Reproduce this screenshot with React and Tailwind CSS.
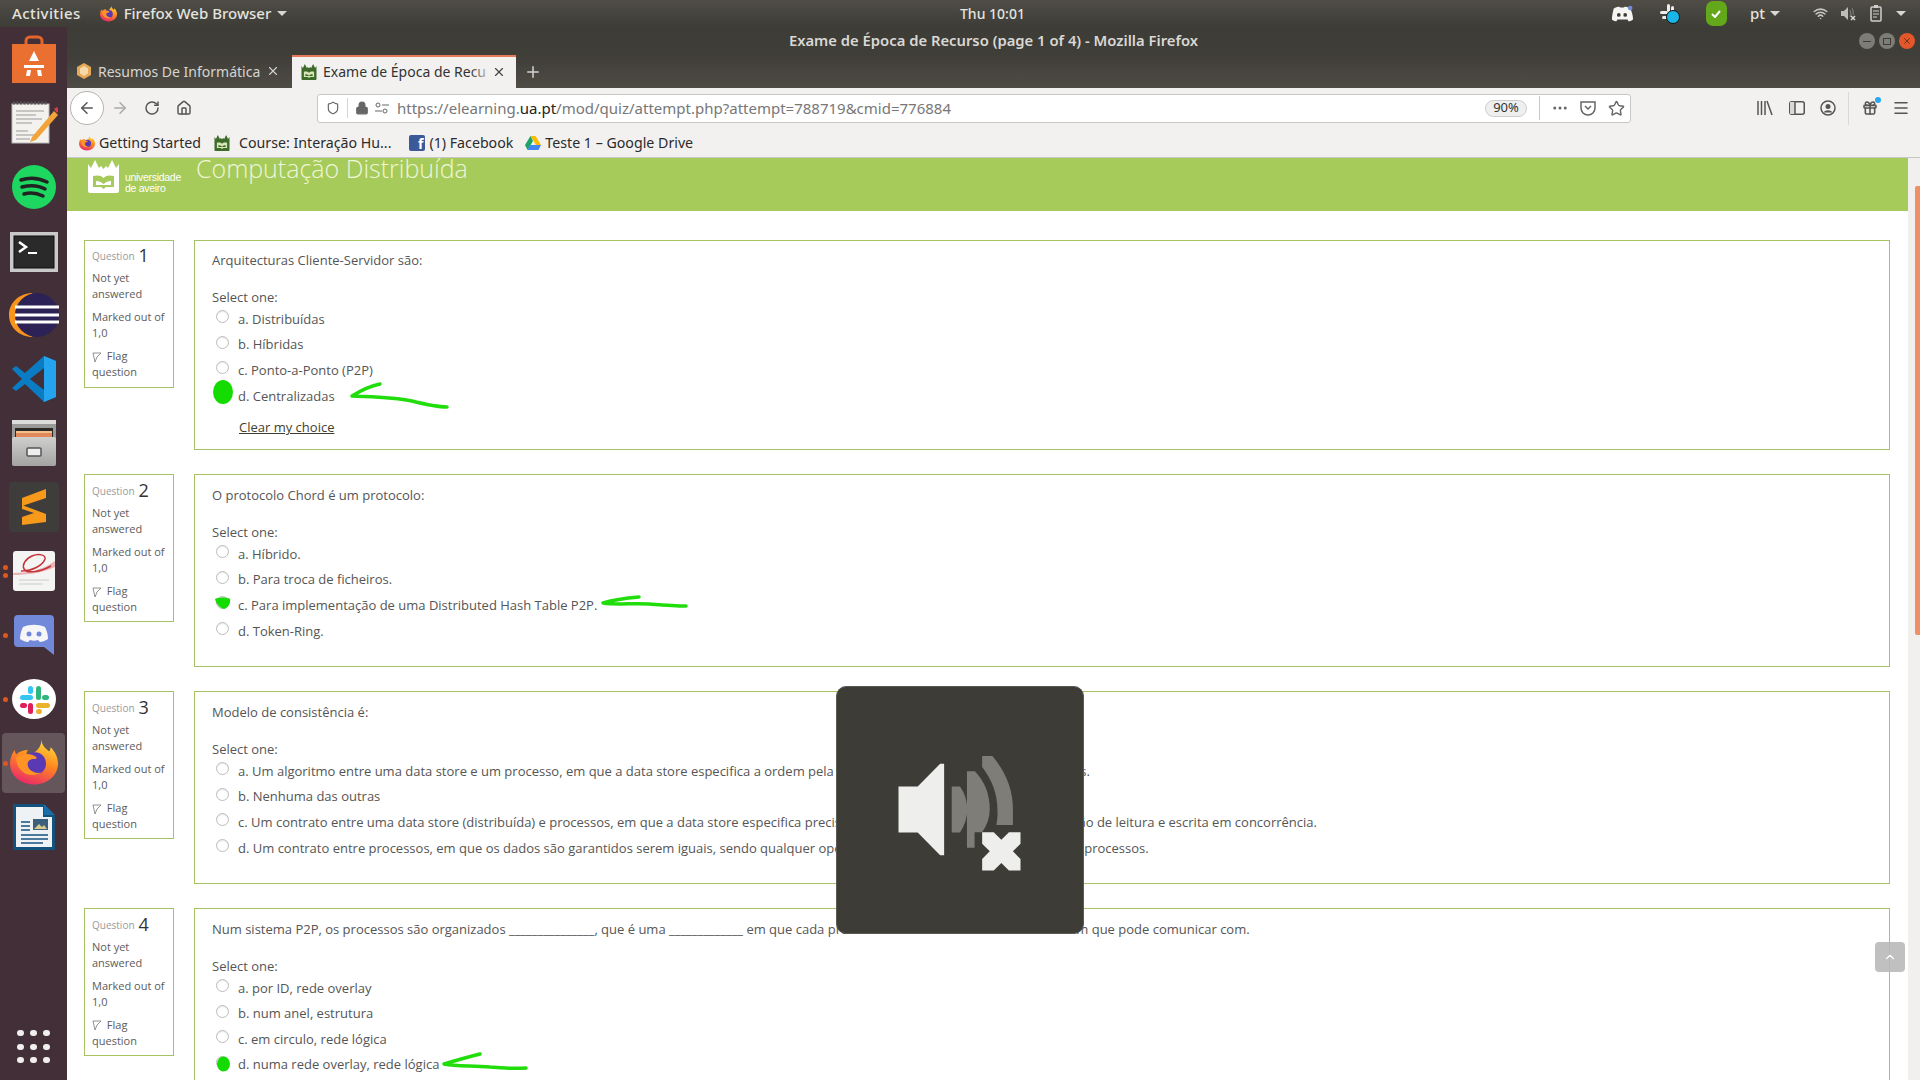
import { ArrowLeft, ArrowRight, RotateCw, Home, Lock, Shield, X, Plus, Star, MoreHorizontal, Menu, Gift, Wifi, ChevronUp } from 'lucide-react';

const QUESTIONS = [
  {
    n: 1,
    text: 'Arquitecturas Cliente-Servidor são:',
    options: ['a. Distribuídas', 'b. Híbridas', 'c. Ponto-a-Ponto (P2P)', 'd. Centralizadas'],
    clear: true,
  },
  {
    n: 2,
    text: 'O protocolo Chord é um protocolo:',
    options: ['a. Híbrido.', 'b. Para troca de ficheiros.', 'c. Para implementação de uma Distributed Hash Table P2P.', 'd. Token-Ring.'],
  },
  {
    n: 3,
    text: 'Modelo de consistência é:',
    options: [
      'a. Um algoritmo entre uma data store e um processo, em que a data store especifica a ordem pela qual as escritas são lidas pelos processos.',
      'b. Nenhuma das outras',
      'c. Um contrato entre uma data store (distribuída) e processos, em que a data store especifica precisamente o resultado sob alguma operação de leitura e escrita em concorrência.',
      'd. Um contrato entre processos, em que os dados são garantidos serem iguais, sendo qualquer operação de escrita propagada para outros processos.',
    ],
  },
  {
    n: 4,
    text: 'Num sistema P2P, os processos são organizados _______________, que é uma _____________ em que cada processo tem uma lista de nós aliados com que pode comunicar com.',
    options: ['a. por ID, rede overlay', 'b. num anel, estrutura', 'c. em circulo, rede lógica', 'd. numa rede overlay, rede lógica'],
  },
];

function FirefoxLogo({ size = 16 }) {
  return (
    <svg width={size} height={size} viewBox="0 0 32 32">
      <defs>
        <linearGradient id="ffo" x1="0.7" y1="0" x2="0.3" y2="1">
          <stop offset="0" stopColor="#ffdc3a" />
          <stop offset="0.45" stopColor="#ff8a1f" />
          <stop offset="1" stopColor="#e9266a" />
        </linearGradient>
      </defs>
      <path d="M21 1c0 4 3 6 5 8 1-1 1-2 1-3 3 3 5 7 5 11 0 8-7 14-16 14C7 31 0 25 0 17c0-3 1-6 3-9l1 3c2-2 5-3 8-3-1 1-1 2-1 3 5 0 10-4 10-10z" fill="url(#ffo)" />
      <circle cx="16.500" cy="17" r="7.500" fill="#5b39b5" />
      <path d="M4 13c3-2 7-3 10-2 4 1 5 3 2 3-3 0-5 2-4 5 1 3 5 5 9 4-5 3-11 2-14-2-2-2-3-5-3-8z" fill="#ff9326" />
    </svg>
  );
}

function UaLogo({ w = 31, h = 33, fill = '#fff', book = '#a6cb5a' }) {
  return (
    <svg width={w} height={h} viewBox="0 0 31 33">
      <path d="M0 4l3 4 4-8 4 8 2-2 2.500 3 2.500-3 2 2 4-8 4 8 3-4v27a2 2 0 0 1-2 2H2a2 2 0 0 1-2-2z" fill={fill} />
      <path d="M5 16c4-1 8-1 10.500 2 2.500-3 6.500-3 10.500-2v11h-8l-2.500 2-2.500-2H5z" fill={book} />
      <path d="M8 21c3 0 5 1 7.500 3 2.500-2 4.500-3 7.500-3v4h-15z" fill={fill} />
    </svg>
  );
}

function TopBar() {
  return (
    <div className="relative flex h-[27px] shrink-0 items-center bg-gradient-to-b from-[#4f4d46] to-[#3e3c37] text-[15px] font-medium text-[#e4e3df]">
      <span className="ml-3 tracking-[0.4px]">Activities</span>
      <span className="ml-[19px] flex items-center gap-[7px]">
        <FirefoxLogo size={17} />
        Firefox Web Browser
      </span>
      <span className="ml-[6px] h-0 w-0 border-x-[5px] border-t-[5px] border-x-transparent border-t-[#d8d7d3]" />
      <span className="absolute left-[960px] top-[3px] text-[14px]">Thu 10:01</span>
      <div className="ml-auto flex items-center">
        <svg width="22" height="18" viewBox="0 0 24 18" className="mr-[26px]">
          <path d="M3 3c3-2 5-2 6-2l1 1h4l1-1c1 0 3 0 6 2 2 4 3 8 3 12-2 2-4 2-5 2l-1-2H7l-1 2c-1 0-3 0-5-2 0-4 1-8 2-12z" fill="#f4f4f2" />
          <circle cx="8.500" cy="10" r="2" fill="#3e3c37" />
          <circle cx="15.500" cy="10" r="2" fill="#3e3c37" />
          <circle cx="21" cy="2.500" r="2.500" fill="#7289da" />
        </svg>
        <svg width="22" height="22" viewBox="0 0 22 22" className="mr-[25px]">
          <rect x="8" y="1" width="3" height="8" rx="1.500" fill="#eee" />
          <rect x="1" y="8" width="8" height="3" rx="1.500" fill="#eee" />
          <rect x="3" y="13" width="5" height="3" rx="1.500" fill="#eee" />
          <rect x="12" y="3" width="3" height="6" rx="1.500" fill="#eee" />
          <circle cx="14" cy="14" r="6.500" fill="#19b5e6" stroke="#111" />
        </svg>
        <span className="mr-[23px] flex h-[25px] w-[21px] items-center justify-center rounded-[7px] bg-[#62a81a]">
          <svg width="10" height="8" viewBox="0 0 10 8"><path d="M1 4l3 3 5-6" fill="none" stroke="#fff" strokeWidth="2" /></svg>
        </span>
        <span className="text-[15px]">pt</span>
        <span className="ml-[5px] mr-[33px] h-0 w-0 border-x-[5px] border-t-[5px] border-x-transparent border-t-[#d8d7d3]" />
        <Wifi size={15} strokeWidth={2.5} className="mr-[13px] text-[#c8c7c3]" />
        <svg width="15" height="15" viewBox="0 0 15 15" className="mr-[14px]">
          <path d="M0 5h3l4-4v13l-4-4H0z" fill="#bdbcb8" />
          <path d="M9 4c1 2 1 5 0 7M11 2c1 2 2 4 1 7" stroke="#777" strokeWidth="1.200" fill="none" />
          <path d="M10 10l4 4m0-4l-4 4" stroke="#d8d7d3" strokeWidth="1.500" />
        </svg>
        <svg width="14" height="17" viewBox="0 0 14 17" className="mr-[12px]">
          <rect x="1" y="2" width="10" height="14" rx="1" fill="none" stroke="#d0cfcb" strokeWidth="1.500" />
          <rect x="4" y="0" width="4" height="3" fill="#d0cfcb" />
          <path d="M3 6h6M3 9h6M3 12h4" stroke="#d0cfcb" />
        </svg>
        <span className="mr-[14px] h-0 w-0 border-x-[5px] border-t-[5px] border-x-transparent border-t-[#d8d7d3]" />
      </div>
    </div>
  );
}

function DockItem({ dots = 0, active, children }) {
  return (
    <div className="relative flex h-[64px] items-center justify-center">
      {active && <div className="absolute inset-x-[2px] inset-y-[2px] rounded-[4px] bg-[#65565c]" />}
      {dots > 0 && (
        <div className="absolute left-[3px] top-0 flex h-full flex-col justify-center gap-[3px]">
          {Array.from({ length: dots }).map((_, i) => (
            <span key={i} className="h-[5px] w-[5px] rounded-full bg-[#e0561f]" />
          ))}
        </div>
      )}
      <div className="relative flex items-center justify-center">{children}</div>
    </div>
  );
}

function Dock() {
  return (
    <div className="flex w-[67px] shrink-0 flex-col bg-[#432f37] pb-[5px]">
      <DockItem>
        <svg width="44" height="48" viewBox="0 0 44 48">
          <path d="M14 10V6a4 4 0 0 1 4-4h8a4 4 0 0 1 4 4v4" fill="none" stroke="#e2662b" strokeWidth="3" />
          <rect x="0" y="9" width="44" height="39" fill="#ea7032" />
          <path d="M22 16l5 10H17zM12 30h20v3H12zM15 35h4l-1 6h-4zM25 35h4l1 6h-4z" fill="#fff" />
        </svg>
      </DockItem>
      <DockItem>
        <svg width="48" height="44" viewBox="0 0 48 44">
          <rect x="2" y="3" width="37" height="39" fill="#f3f2ee" stroke="#bbb" />
          <path d="M3 2h35" stroke="#555" strokeWidth="3" strokeDasharray="2 1.500" />
          <path d="M6 10h28M6 14h20M6 18h26M6 22h16M6 30h12M6 34h24M6 38h14" stroke="#999" />
          <path d="M22 36l22-26 4 4-22 25-6 2z" fill="#f2a33a" />
          <path d="M44 8l3-2 2 3-2 3z" fill="#d3424a" />
        </svg>
      </DockItem>
      <DockItem>
        <svg width="44" height="44" viewBox="0 0 44 44">
          <circle cx="22" cy="22" r="22" fill="#1ed760" />
          <path d="M9 15c9-3 18-2 26 2M10 22c8-2 16-2 23 2M12 29c7-2 13-1 19 2" fill="none" stroke="#222" strokeWidth="3.500" strokeLinecap="round" />
        </svg>
      </DockItem>
      <DockItem>
        <svg width="48" height="40" viewBox="0 0 48 40" className="translate-y-[1px]">
          <rect x="0" y="0" width="48" height="40" fill="#c9c9c9" />
          <rect x="4" y="4" width="40" height="32" fill="#2a2a2a" stroke="#0e0e0e" />
          <path d="M9 10l7 5-7 5" fill="none" stroke="#fff" strokeWidth="2.500" />
          <path d="M18 21h9" stroke="#fff" strokeWidth="2" />
        </svg>
      </DockItem>
      <DockItem>
        <svg width="50" height="46" viewBox="0 0 50 46">
          <path d="M24 1C10 1 0 11 0 23s10 22 24 22C14 41 7 33 7 23S14 5 24 1z" fill="#f7941e" />
          <circle cx="28" cy="23" r="22" fill="#2c2255" />
          <path d="M6 15h44M6 23h44M6 30h44" stroke="#fff" strokeWidth="3" />
        </svg>
      </DockItem>
      <DockItem>
        <svg width="46" height="46" viewBox="0 0 46 46">
          <path d="M33 0l12 5v36l-12 5-19-18-9 7-4-3 10-9L1 13l4-3 9 7z" fill="#0a7cc4" />
          <path d="M33 0l12 5v36l-12 5z" fill="#24a3ee" />
          <path d="M33 12L19 23l14 11z" fill="#432f37" />
        </svg>
      </DockItem>
      <DockItem>
        <svg width="44" height="46" viewBox="0 0 44 46">
          <defs>
            <linearGradient id="cab" x1="0" y1="0" x2="0" y2="1">
              <stop offset="0" stopColor="#cfcfcd" />
              <stop offset="1" stopColor="#a3a3a1" />
            </linearGradient>
          </defs>
          <rect x="0" y="0" width="44" height="46" rx="3" fill="#9a9a98" />
          <rect x="0" y="0" width="44" height="4" fill="#dcdcda" />
          <rect x="3" y="8" width="38" height="9" fill="#2c2a28" />
          <rect x="4" y="11" width="36" height="2" fill="#f2c08a" />
          <rect x="4" y="13" width="36" height="4" fill="#e2895c" />
          <rect x="0" y="17" width="44" height="29" rx="2" fill="url(#cab)" />
          <rect x="15" y="28" width="14" height="8" rx="1" fill="#eee" stroke="#555" strokeWidth="1.500" />
        </svg>
      </DockItem>
      <DockItem>
        <div className="flex h-[50px] w-[50px] items-center justify-center rounded-[4px] bg-[#3f3d3c]">
          <svg width="28" height="36" viewBox="0 0 28 36">
            <path d="M26 0v9L2 17V9zM2 16l24 9v8L2 36v-8l12-4-12-4z" fill="#f79a1c" />
          </svg>
        </div>
      </DockItem>
      <DockItem dots={2}>
        <svg width="42" height="40" viewBox="0 0 42 40">
          <rect width="42" height="40" rx="3" fill="#f4f4f2" />
          <path d="M0 22c14 0 30-3 42-12v6C30 22 14 24 0 24z" fill="#e8b5b5" />
          <path d="M8 20c12 0 22-6 24-12 1-4-6-6-13-3-7 3-10 9-8 13 3 5 16 3 27-3" fill="none" stroke="#c5323a" strokeWidth="1.500" />
          <path d="M6 29h30M6 33h24" stroke="#ccc" />
        </svg>
      </DockItem>
      <DockItem dots={1}>
        <svg width="40" height="40" viewBox="0 0 40 40">
          <path d="M4 0h32a4 4 0 0 1 4 4v36l-10-8H4a4 4 0 0 1-4-4V4a4 4 0 0 1 4-4z" fill="#7289da" />
          <path d="M9 12c7-3 15-3 22 0 2 4 3 8 3 12-3 2-6 3-8 3l-2-2c-3 1-5 1-8 0l-2 2c-2 0-5-1-8-3 0-4 1-8 3-12z" fill="#f6f6f8" />
          <circle cx="15" cy="19" r="2.500" fill="#7289da" />
          <circle cx="25" cy="19" r="2.500" fill="#7289da" />
        </svg>
      </DockItem>
      <DockItem dots={1}>
        <svg width="44" height="40" viewBox="0 0 44 40">
          <ellipse cx="22" cy="20" rx="22" ry="20" fill="#fff" />
          <rect x="8" y="16" width="13" height="5" rx="2.500" fill="#36c5f0" />
          <rect x="16" y="7" width="5" height="8" rx="2.500" fill="#36c5f0" />
          <rect x="24" y="7" width="5" height="14" rx="2.500" fill="#2eb67d" />
          <rect x="30" y="16" width="7" height="5" rx="2.500" fill="#2eb67d" />
          <rect x="24" y="24" width="14" height="5" rx="2.500" fill="#ecb22e" />
          <rect x="24" y="30" width="6" height="5" rx="2.500" fill="#ecb22e" />
          <rect x="16" y="24" width="5" height="11" rx="2.500" fill="#e01e5a" />
          <rect x="8" y="24" width="7" height="5" rx="2.500" fill="#e01e5a" />
        </svg>
      </DockItem>
      <DockItem dots={1} active>
        <div className="-translate-y-[1px]"><FirefoxLogo size={48} /></div>
      </DockItem>
      <DockItem>
        <svg width="42" height="46" viewBox="0 0 42 46">
          <path d="M0 0h30l12 12v34H0z" fill="#14527e" />
          <path d="M3 3h27v10h9v30H3z" fill="#eef2f4" />
          <path d="M31 0l11 11H31z" fill="#1a6ea8" />
          <path d="M8 18h9M8 22h9M8 26h9M8 31h27M8 35h27M8 39h22" stroke="#14527e" strokeWidth="1.500" />
          <rect x="20" y="15" width="15" height="11" fill="#3c5f7d" />
          <path d="M21 25l5-5 3 3 2-2 3 4z" fill="#d6c98b" />
        </svg>
      </DockItem>
      <div className="mt-auto grid h-[36px] grid-cols-3 gap-x-[6px] gap-y-[5px] self-center">
        {Array.from({ length: 9 }).map((_, i) => (
          <span key={i} className="h-[6px] w-[7px] rounded-full bg-[#f0efed]" />
        ))}
      </div>
      <div className="h-[9px]" />
    </div>
  );
}

function TitleBar() {
  return (
    <div className="relative flex h-[29px] shrink-0 items-center justify-center bg-gradient-to-b from-[#3e3c37] to-[#403e39] pb-[2px] text-[14.800px] font-semibold text-[#d9d8d4]">
      Exame de Época de Recurso (page 1 of 4) - Mozilla Firefox
      <div className="absolute right-[5px] top-[6px] flex gap-[4px]">
        <span className="flex h-4 w-4 items-center justify-center rounded-full bg-[#7d7c76]"><span className="h-[1px] w-[8px] bg-[#3e3c37]" /></span>
        <span className="flex h-4 w-4 items-center justify-center rounded-full bg-[#7d7c76]"><span className="h-[7px] w-[8px] border border-[#3e3c37]" /></span>
        <span className="flex h-4 w-4 items-center justify-center rounded-full bg-[#e4572a]"><X size={10} className="text-[#5a2a18]" /></span>
      </div>
    </div>
  );
}

function TabStrip() {
  return (
    <div className="flex h-[32px] shrink-0 items-end bg-gradient-to-b from-[#403e39] to-[#4f4c45] text-[14px]">
      <div className="flex h-[32px] w-[225px] items-center pb-[2px] pl-[9px] pr-[12px] text-[#d6d5d0]">
        <svg width="16" height="16" viewBox="0 0 16 16" className="mr-[6px] shrink-0">
          <path d="M8 0l7 4v8l-7 4-7-4V4z" fill="#e6a959" />
          <path d="M8 3l4 2.500v5L8 13l-4-2.500v-5z" fill="#f6d9a8" />
        </svg>
        <span className="flex-1 whitespace-nowrap">Resumos De Informática</span>
        <X size={14} className="shrink-0 text-[#cfcec9]" />
      </div>
      <div className="relative flex h-[33px] w-[224px] items-center overflow-hidden border-t-[2px] border-[#e8795a] bg-[#f2f1f0] pb-[2px] pl-[9px] pr-[10px] text-[#333]">
        <div className="mr-[6px] shrink-0"><UaLogo w={16} h={16} fill="#3d6b2a" book="#d8e6b8" /></div>
        <span className="flex-1 overflow-hidden whitespace-nowrap">Exame de Época de Recu</span>
        <div className="absolute right-[22px] top-0 h-full w-[24px] bg-gradient-to-r from-transparent to-[#f2f1f0]" />
        <X size={14} className="relative shrink-0 text-[#444]" />
      </div>
      <Plus size={18} className="mb-[7px] ml-[8px] text-[#d6d5d0]" />
    </div>
  );
}

function Toolbar() {
  return (
    <div className="flex h-[40px] shrink-0 items-center bg-[#f2f1f0] pl-[3px] pr-[10px] text-[#555]">
      <span className="flex h-[34px] w-[34px] items-center justify-center rounded-full border border-[#b5b4b2] bg-white">
        <ArrowLeft size={18} />
      </span>
      <ArrowRight size={18} className="ml-[7px] text-[#a9a9a7]" />
      <RotateCw size={16} strokeWidth={2.2} className="ml-[15px]" />
      <Home size={16} strokeWidth={2.2} className="ml-[16px]" />
      <div className="ml-[125px] flex h-[29px] w-[1314px] items-center rounded-[3px] border border-[#c8c7c5] bg-white text-[15px]">
        <Shield size={14} className="ml-[8px] text-[#666]" />
        <span className="ml-[7px] h-[20px] w-[1px] bg-[#d6d5d3]" />
        <Lock size={14} fill="#666" className="ml-[7px] text-[#666]" />
        <svg width="14" height="12" viewBox="0 0 14 12" className="ml-[6px]">
          <circle cx="3" cy="3" r="2" fill="none" stroke="#666" />
          <path d="M7 3h7M0 9h7" stroke="#666" />
          <circle cx="10" cy="9" r="2" fill="none" stroke="#666" />
        </svg>
        <span className="ml-[8px] whitespace-nowrap text-[#777]">
          https://elearning.<span className="text-[#222]">ua.pt</span>/mod/quiz/attempt.php?attempt=788719&amp;cmid=776884
        </span>
        <span className="ml-auto flex h-[17px] w-[42px] items-center justify-center rounded-full border border-[#ccc] bg-[#efefef] text-[13px] text-[#333]">90%</span>
        <span className="ml-[12px] h-[24px] w-[1px] bg-[#c9c8c6]" />
        <MoreHorizontal size={18} className="ml-[11px] text-[#666]" />
        <svg width="16" height="16" viewBox="0 0 16 16" className="ml-[11px]">
          <path d="M1 2h14v6a7 7 0 0 1-14 0z" fill="none" stroke="#666" strokeWidth="1.500" />
          <path d="M5 6l3 3 3-3" fill="none" stroke="#666" strokeWidth="1.500" />
        </svg>
        <Star size={17} strokeWidth={2} className="ml-[12px] mr-[5px] text-[#666]" />
      </div>
      <div className="ml-auto flex items-center">
        <svg width="16" height="16" viewBox="0 0 16 16">
          <path d="M1 1v14M4.500 1v14M8 1v14M10 1l5 14" stroke="#555" strokeWidth="1.500" fill="none" />
        </svg>
        <svg width="16" height="14" viewBox="0 0 16 14" className="ml-[16px]">
          <rect x="0.750" y="0.750" width="14.500" height="12.500" rx="2" fill="none" stroke="#555" strokeWidth="1.500" />
          <rect x="1" y="1" width="5" height="12" fill="#d9d8d6" />
          <path d="M6 1v12" stroke="#555" strokeWidth="1.500" />
        </svg>
        <svg width="16" height="16" viewBox="0 0 16 16" className="ml-[15px]">
          <circle cx="8" cy="8" r="7" fill="none" stroke="#555" strokeWidth="1.500" />
          <circle cx="8" cy="6.500" r="2.500" fill="#555" />
          <path d="M3.500 12.500c2-3 7-3 9 0" fill="#555" />
        </svg>
        <span className="ml-[12px] h-[33px] w-[1px] bg-[#d9d8d6]" />
        <div className="relative ml-[13px]">
          <Gift size={16} strokeWidth={2.4} className="text-[#555]" />
          <span className="absolute -right-[3px] -top-[3px] h-[6px] w-[6px] rounded-full bg-[#2aa7f0]" />
        </div>
        <Menu size={18} className="ml-[14px]" />
      </div>
    </div>
  );
}

function Bookmarks() {
  return (
    <div className="flex h-[30px] shrink-0 items-center border-b border-[#c8c7c5] bg-[#f2f1f0] pl-[12px] text-[14.200px] text-[#2b2b2b]">
      <FirefoxLogo size={16} />
      <span className="ml-[4px]">Getting Started</span>
      <div className="ml-[13px]"><UaLogo w={16} h={16} fill="#3d6b2a" book="#d8e6b8" /></div>
      <span className="ml-[9px]">Course: Interação Hu...</span>
      <span className="ml-[18px] flex h-[16px] w-[16px] items-end justify-end rounded-[2px] bg-[#3b5998] pr-[2px] text-[14px] font-bold leading-[14px] text-white">f</span>
      <span className="ml-[4px]">(1) Facebook</span>
      <svg width="16" height="14" viewBox="0 0 16 14" className="ml-[12px]">
        <path d="M5.500 0h5L16 9h-5z" fill="#fbbc04" />
        <path d="M5.500 0L0 9l2.500 5L8 5z" fill="#1fa463" />
        <path d="M2.500 14h11l2.500-5H5z" fill="#4285f4" />
      </svg>
      <span className="ml-[4px]">Teste 1 – Google Drive</span>
    </div>
  );
}

function Radio() {
  return <span className="h-[13px] w-[13px] -translate-y-[2px] rounded-full border border-[#bdbdbd] bg-white shadow-[inset_0_1px_1px_rgba(0,0,0,0.1)]" />;
}

function QuestionBlock({ q }) {
  return (
    <div className="mb-[24px] flex items-start gap-[20px]">
      <div className={`w-[90px] shrink-0 border border-[#a6c262] px-[7px] text-[11px] leading-[16px] text-[#5c5c5c] ${q.n === 1 ? 'pb-[7px]' : 'pb-[6px] pt-[1px]'}`}>
        <div className="flex h-[28px] items-center gap-[4px] pt-[2px]">
          <span className="text-[10px] text-[#9a9a9a]">Question</span>
          <span className="-translate-y-[1px] text-[18px] text-[#333]">{q.n}</span>
        </div>
        <div className="mt-[1px]">Not yet answered</div>
        <div className="mt-[7px]">Marked out of 1,0</div>
        <div className="mt-[7px]">
          <svg width="10" height="11" viewBox="0 0 10 11" className="mr-[2px] inline-block">
            <path d="M1 1h8L5 5 3 10z" fill="none" stroke="#777" strokeWidth="0.800" />
          </svg>
          {' '}Flag question
        </div>
      </div>
      <div className={`flex-1 border border-[#a6c262] pl-[17px] text-[13px] leading-[20px] text-[#555] ${q.clear ? 'pb-[11.600px] pt-[9px]' : 'pb-[22.600px] pt-[10px]'}`}>
        <div className="whitespace-nowrap">{q.text}</div>
        <div className="mt-[17px]">Select one:</div>
        <div className="-mt-[1px]">
          {q.options.map((o) => (
            <div key={o} className="flex h-[25.600px] items-center whitespace-nowrap pl-[4px]">
              <Radio />
              <span className="ml-[9px]">{o}</span>
            </div>
          ))}
        </div>
        {q.clear && <a className="mt-[9px] ml-[27px] block text-[#3f3f2f] underline">Clear my choice</a>}
      </div>
    </div>
  );
}

function Page() {
  return (
    <div className="flex min-h-0 flex-1 overflow-hidden bg-white">
      <div className="min-w-0 flex-1 overflow-hidden font-['Open_Sans',sans-serif]">
        <div className="flex h-[53px] items-start bg-[#a6cb5a] pl-[21px]">
          <div className="mt-[2px]"><UaLogo /></div>
          <div className="ml-[6px] mt-[14px] font-['Liberation_Sans',sans-serif] text-[10.500px] leading-[11px] tracking-[-0.3px] text-white">
            universidade<br />de aveiro
          </div>
          <div className="ml-[15px] text-[25px] font-light leading-[20px] text-[#eef5d8]">Computação Distribuída</div>
        </div>
        <div className="pl-[17px] pr-[18px] pt-[29px]">
          {QUESTIONS.map((q) => <QuestionBlock key={q.n} q={q} />)}
        </div>
      </div>
      <div className="flex w-[12px] shrink-0 justify-end bg-[#f2f0ee] pt-[28px]">
        <span className="h-[449px] w-[5px] rounded-l-[2px] bg-[#ee8f68]" />
      </div>
    </div>
  );
}

function MuteOsd() {
  return (
    <div className="absolute left-[836px] top-[686px] flex h-[248px] w-[248px] items-center justify-center rounded-[10px] border border-[#5b5a55] bg-[#3e3c37]">
      <svg width="248" height="248" viewBox="48 48 744 744">
        <path d="M234 349h58l68-69h12v277h-12l-68-69h-58z" fill="#eeeeec" />
        <g fill="#7e7d78">
          <path d="M395 349h25q22 31 22 69t-22 70h-25z" />
          <path d="M441 303h24q45 47 45 115 0 37-23 69h-23v47h-23z" />
          <path d="M487 257h31q62 73 62 161v47h-50q5-25 3-47 0-68-46-128z" />
        </g>
        <path d="M487 487h35l23 23 23-23h35v35l-23 23 23 23v35h-35l-23-23-23 23h-35v-35l23-23-23-23z" fill="#eeeeec" />
      </svg>
    </div>
  );
}

function Ink() {
  // pen marks drawn over the quiz, full-page coordinates
  return (
    <svg className="pointer-events-none absolute left-0 top-0" width="1920" height="1080" viewBox="0 0 1920 1080">
      <g fill="none" stroke="#22dd0c" strokeWidth="3.500" strokeLinecap="round" strokeLinejoin="round">
        <path d="M380 384c-10 2-20 7-28 12 20 1 40 1 60 5 12 3 24 6 35 6" />
        <path d="M639 597c-12 1-26 3-36 6 14 2 30 0 46 1 13 1 25 2 37 2" />
        <path d="M480 1054c-12 3-26 7-36 10 14 3 30 1 46 3 12 1 24 2 36 1" />
      </g>
      <g fill="#14dc00">
        <ellipse cx="223" cy="392" rx="10" ry="12" />
        <path d="M215 599c4-2 12-2 15 0 1 4-2 9-6 10-4-1-8-5-9-10z" />
        <ellipse cx="223.500" cy="1064" rx="6.500" ry="7.500" />
      </g>
    </svg>
  );
}

export default function App() {
  return (
    <div className="relative flex h-[1080px] w-[1920px] flex-col overflow-hidden font-['Noto_Sans',sans-serif]">
      <TopBar />
      <div className="flex min-h-0 flex-1">
        <Dock />
        <div className="flex min-w-0 flex-1 flex-col">
          <TitleBar />
          <TabStrip />
          <Toolbar />
          <Bookmarks />
          <Page />
        </div>
      </div>
      <Ink />
      <MuteOsd />
      <div className="absolute left-[1875px] top-[942px] flex h-[30px] w-[30px] items-center justify-center rounded-[4px] bg-[#b9b9b9]/90">
        <ChevronUp size={14} className="text-white" />
      </div>
    </div>
  );
}
